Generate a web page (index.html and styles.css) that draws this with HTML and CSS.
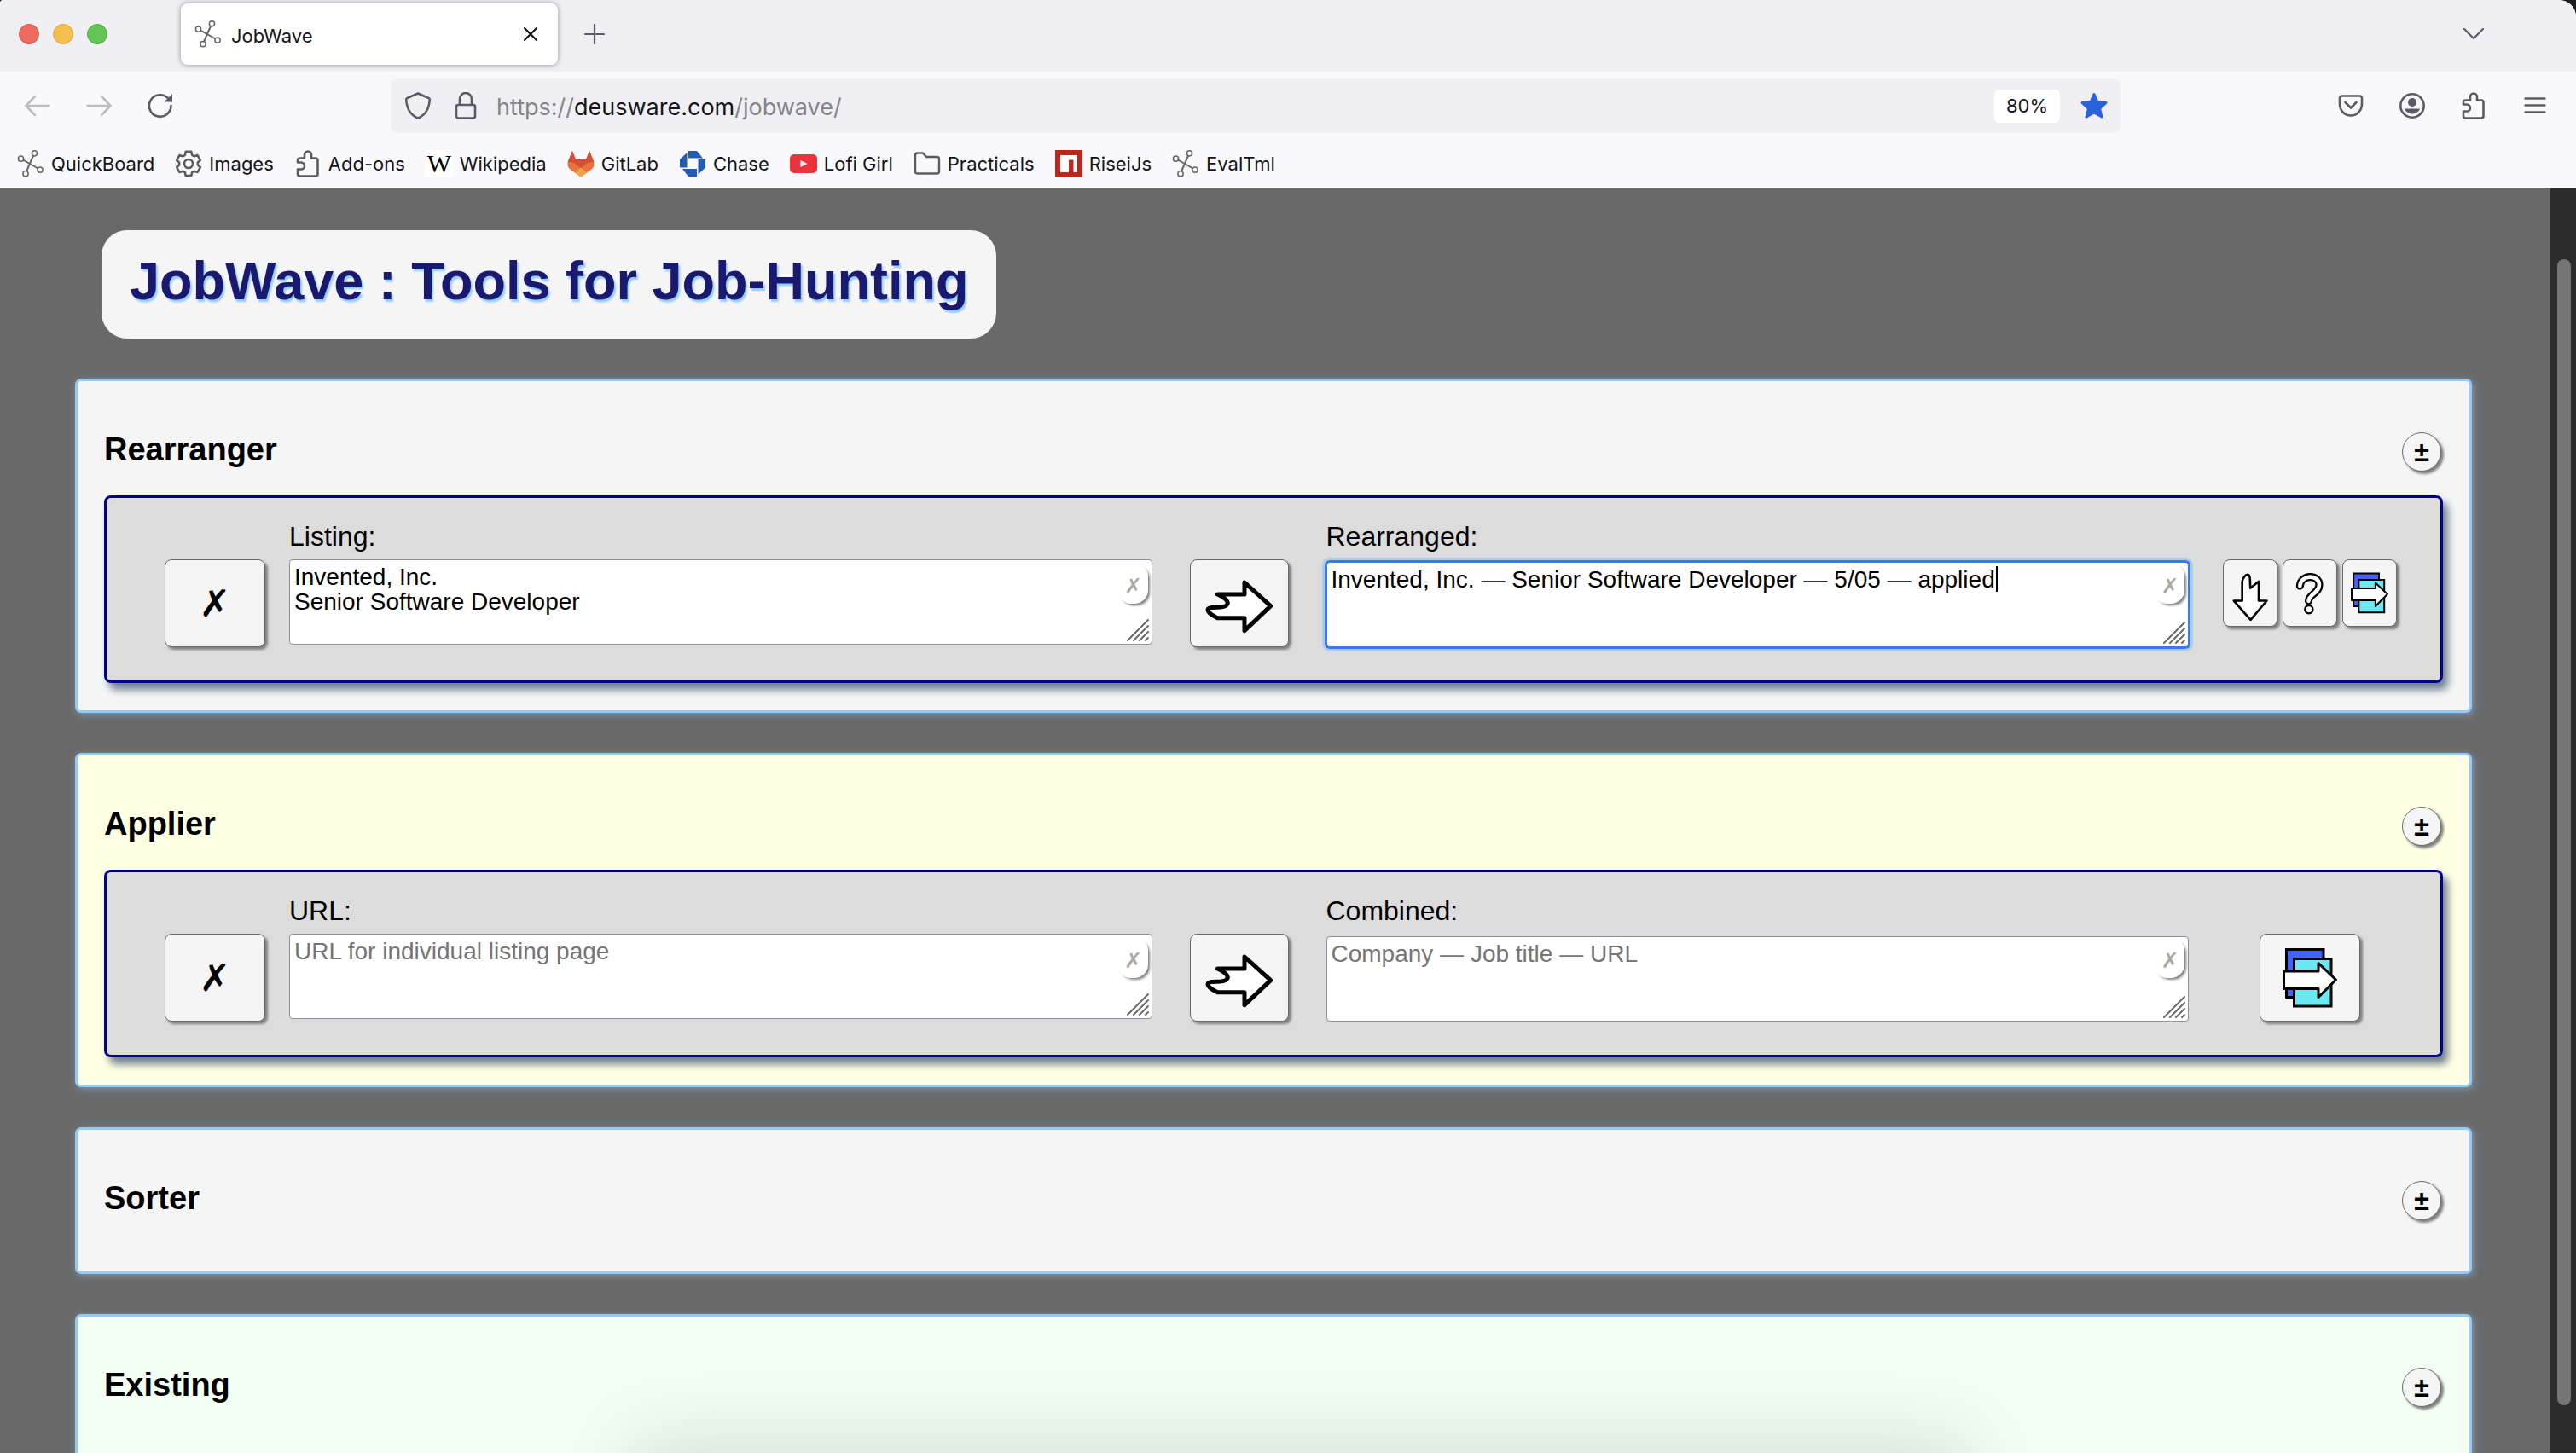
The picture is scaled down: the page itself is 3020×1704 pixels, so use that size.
FILE: index.html
```html
<!DOCTYPE html>
<html lang="en">
<head>
<meta charset="utf-8">
<title>JobWave</title>
<link rel="stylesheet" href="styles.css">
</head>
<body>
<svg class="sprite" aria-hidden="true">
  <symbol id="molecule" viewBox="0 0 32 32"><g fill="none" stroke="#666" stroke-width="1.5"><path d="M7 11.500 24.500 21.500M19.300 6 11 25" stroke-width="2"/><circle cx="4.500" cy="10.200" r="3.100"/><circle cx="20.500" cy="3.800" r="3.100"/><circle cx="27" cy="23.200" r="3.100"/><circle cx="10" cy="27.700" r="3.100"/></g></symbol>
  <symbol id="puzzle" viewBox="0 0 32 32"><path fill="none" stroke="#5b5b66" stroke-width="2.600" stroke-linejoin="round" d="M4 14.500V12Q4 9.500 6.500 9.500H12V5.500A4 4 0 0 1 20 5.500V9.500H25Q27.500 9.500 27.500 12V28Q27.500 30.500 25 30.500H6.500Q4 30.500 4 28V22.500H8A4 4 0 0 0 8 14.500Z"/></symbol>
  <symbol id="right-arrow" viewBox="0 0 240 210"><path fill="#fff" stroke="#000" stroke-width="15" stroke-linejoin="round" d="M43 72H138V30L230 113L138 200V155H43C25 147 9 135 9 127C9 118 25 118 42 118C78 118 86 104 72 90Q62 80 43 72Z"/></symbol>
  <symbol id="copy" viewBox="25 42 134 148"><g stroke="#000" stroke-width="6"><path fill="#4263f5" d="M37 49H124V161H37Z"/><path fill="#6ce9f0" d="M55 71H142V182H55Z"/><path fill="#fff" stroke-linejoin="round" d="M31 100H112V81L153 120L112 161V141H31Z"/></g></symbol>
  <symbol id="grip" viewBox="0 0 26 26"><path stroke="#6b6b6b" stroke-width="2" stroke-linecap="round" d="M1 25 25 1M8 25 25 8M15 25 25 15M22 25 25 22"/></symbol>
</svg>

<header class="chrome">
  <div class="tabstrip">
    <div class="lights"><i class="light red"></i><i class="light amber"></i><i class="light green"></i></div>
    <div class="tab">
      <svg class="icon"><use href="#molecule"/></svg>
      <span class="tab-title">JobWave</span>
      <button class="plain" aria-label="Close tab"><svg width="18" height="18" viewBox="0 0 18 18"><path d="M2 2 16 16M16 2 2 16" stroke="#15141a" stroke-width="2.200" stroke-linecap="round"/></svg></button>
    </div>
    <button class="plain new-tab" aria-label="New tab"><svg width="24" height="24" viewBox="0 0 24 24"><path d="M12 1V23M1 12H23" stroke="#5b5b66" stroke-width="2.200" stroke-linecap="round"/></svg></button>
    <button class="plain list-tabs" aria-label="List all tabs"><svg width="26" height="16" viewBox="0 0 26 16"><path d="M2 2 13 13 24 2" fill="none" stroke="#5b5b66" stroke-width="2.200" stroke-linecap="round" stroke-linejoin="round"/></svg></button>
  </div>

  <div class="navbar">
    <div class="nav-buttons">
      <button class="plain" aria-label="Back"><svg class="icon" viewBox="0 0 32 32"><path d="M13 5 2.500 16 13 27M3 16H29.500" fill="none" stroke="#bcbcc1" stroke-width="2.600" stroke-linecap="round" stroke-linejoin="round"/></svg></button>
      <button class="plain" aria-label="Forward"><svg class="icon" viewBox="0 0 32 32"><path d="M19 5 29.500 16 19 27M29 16H2.500" fill="none" stroke="#bcbcc1" stroke-width="2.600" stroke-linecap="round" stroke-linejoin="round"/></svg></button>
      <button class="plain" aria-label="Reload"><svg class="icon" viewBox="0 0 32 32"><path d="M28.500 16A12.800 12.800 0 1 1 25 7.200" fill="none" stroke="#5b5b66" stroke-width="2.600" stroke-linecap="round"/><path d="M30 2V11.500H20.500Z" fill="#5b5b66"/></svg></button>
    </div>
    <div class="urlbar">
      <svg class="icon" viewBox="0 0 32 32"><path d="M16 1.500 28.500 7Q30 7.500 29.800 9C29 20 25 27 16 30.500C7 27 3 20 2.200 9Q2 7.500 3.500 7Z" fill="none" stroke="#5b5b66" stroke-width="2.600" stroke-linejoin="round"/></svg>
      <svg class="icon" viewBox="0 0 32 32"><path d="M9 15V8A7 7 0 0 1 23 8V15M7 15H25Q27 15 27 17V28Q27 30.500 24.500 30.500H7.500Q5 30.500 5 28V17Q5 15 7 15Z" fill="none" stroke="#5b5b66" stroke-width="2.600"/></svg>
      <div class="address" role="textbox" aria-label="Address" contenteditable="true" spellcheck="false">https://<span class="host">deusware.com</span>/jobwave/</div>
      <button class="zoom">80%</button>
      <button class="plain" aria-label="Bookmark"><svg class="icon" viewBox="0 0 32 32"><path d="M16 2.500 20 11.500 30 12.500 22.500 19.500 25 29 16 24 7 29 9.500 19.500 2 12.500 12 11.500Z" fill="#2a62dc" stroke="#2a62dc" stroke-width="3" stroke-linejoin="round"/></svg></button>
    </div>
    <div class="nav-tools">
      <button class="plain" aria-label="Save to Pocket"><svg class="icon" viewBox="0 0 32 32"><path d="M5 4.500H26.500Q29 4.500 29 7V14A13 13.500 0 0 1 3 14V7Q3 4.500 5.500 4.500ZM9.500 12 16 18.500 22.500 12" fill="none" stroke="#5b5b66" stroke-width="2.600" stroke-linecap="round" stroke-linejoin="round"/></svg></button>
      <button class="plain" aria-label="Account"><svg class="icon" viewBox="0 0 32 32"><circle cx="16" cy="16" r="13.700" fill="none" stroke="#5b5b66" stroke-width="2.600"/><circle cx="16" cy="12" r="5" fill="#5b5b66"/><path d="M7 19.500H25C24 23 20 25.500 16 25.500S8 23 7 19.500Z" fill="#5b5b66"/></svg></button>
      <button class="plain" aria-label="Extensions"><svg class="icon"><use href="#puzzle"/></svg></button>
      <button class="plain" aria-label="Menu"><svg class="icon" viewBox="0 0 32 32"><path d="M4.500 7.500H27.500M4.500 15.500H27.500M4.500 23.500H27.500" stroke="#5b5b66" stroke-width="2.400" stroke-linecap="round"/></svg></button>
    </div>
  </div>

  <nav class="bookmarks">
    <a href="#"><svg class="icon"><use href="#molecule"/></svg>QuickBoard</a>
    <a href="#"><svg class="icon" viewBox="0 0 32 32"><g fill="none" stroke="#5b5b66" stroke-width="2.600" stroke-linejoin="round"><path d="M12.700 1.900H19.300L20.100 5.800 22.800 7.300 26.600 6.100 29.900 11.800 26.900 14.500V17.500L29.900 20.200 26.600 25.900 22.800 24.700 20.100 26.200 19.300 30.100H12.700L11.900 26.200 9.200 24.700 5.400 25.900 2.100 20.200 5.100 17.500V14.500L2.100 11.800 5.400 6.100 9.200 7.300 11.900 5.800Z"/><circle cx="16" cy="16" r="5"/></g></svg>Images</a>
    <a href="#"><svg class="icon"><use href="#puzzle"/></svg>Add-ons</a>
    <a href="#"><span class="wiki">W</span>Wikipedia</a>
    <a href="#"><svg class="icon" viewBox="0 0 32 32"><path d="M6 1 0.500 15Q0 20 4 23L16 31.500 28 23Q32 20 31.500 15L26 1 22 11H10Z" fill="#e8743b"/><path d="M6 1 0.500 14 8 15 16 21.500 24 15 31.500 14 26 1 22 11H10Z" fill="#d65035"/><path d="M16 20.500 9 26.500 16 31.500 23 26.500Z" fill="#f0a640"/></svg>GitLab</a>
    <a href="#"><svg class="icon" viewBox="0 0 32 32"><g fill="#245cb5"><path d="M11 1H21L28 9.500H11Z"/><path d="M22.500 11H31V20.500L22.500 28.500Z"/><path d="M4 22H21V31H11Z"/><path d="M9.500 3V20.500H1V11Z"/></g></svg>Chase</a>
    <a href="#"><svg class="icon" viewBox="0 0 32 32"><rect y="5" width="32" height="22" rx="5" fill="#ea333d"/><path d="M12.500 12V20L20.500 16Z" fill="#fff"/></svg>Lofi Girl</a>
    <a href="#"><svg class="icon" viewBox="0 0 32 32"><path d="M5 3.500H11L15 8H27.500Q30 8 30 10.500V25Q30 27.500 27.500 27.500H4.500Q2 27.500 2 25V6Q2 3.500 5 3.500Z" fill="none" stroke="#5b5b66" stroke-width="2.400" stroke-linejoin="round"/></svg>Practicals</a>
    <a href="#"><svg class="icon" viewBox="0 0 32 32"><path d="M0 0H32V32H0Z" fill="#bb271a"/><path d="M6 6H26V26H21.500V11.500H16V26H6Z" fill="#fff"/></svg>RiseiJs</a>
    <a href="#"><svg class="icon"><use href="#molecule"/></svg>EvalTml</a>
  </nav>
</header>

<div class="viewport">
  <main class="page">
    <h1 class="title">JobWave : Tools for Job-Hunting</h1>

    <section class="card">
      <div class="card-head"><h2>Rearranger</h2><button class="btn round" aria-label="Toggle Rearranger">±</button></div>
      <div class="panel">
        <button class="btn big cross" aria-label="Clear all">✗</button>
        <div class="field">
          <label for="listing">Listing:</label>
          <div class="box">
            <textarea id="listing" spellcheck="false">Invented, Inc.
Senior Software Developer</textarea>
            <button class="clear" aria-label="Clear listing">✗</button>
            <svg class="grip"><use href="#grip"/></svg>
          </div>
        </div>
        <button class="btn big go" aria-label="Rearrange"><svg width="80" height="70"><use href="#right-arrow"/></svg></button>
        <div class="field result">
          <label for="rearranged">Rearranged:</label>
          <div class="box">
            <textarea id="rearranged" class="focused" spellcheck="false">Invented, Inc. — Senior Software Developer — 5/05 — applied</textarea>
            <i class="caret"></i>
            <button class="clear" aria-label="Clear rearranged">✗</button>
            <svg class="grip"><use href="#grip"/></svg>
          </div>
        </div>
        <div class="tools">
          <button class="btn small" aria-label="Move down"><svg width="62" height="77" viewBox="0 0 185 235"><path fill="#fff" stroke="#000" stroke-width="8" stroke-linejoin="round" d="M34 145H64V78C66 64 76 50 84 51Q92 52 92 72L93 100L123 76V145H152L94 213Z"/></svg></button>
          <button class="btn small" aria-label="Help"><svg width="62" height="77" viewBox="0 0 185 235"><g fill="none" stroke-linecap="round"><path stroke="#000" stroke-width="28" d="M57 92C60 50 126 50 126 88C126 118 88 122 88 146"/><path stroke="#fff" stroke-width="14" d="M57 92C60 50 126 50 126 88C126 118 88 122 88 146"/></g><circle cx="89" cy="176" r="14" fill="#fff" stroke="#000" stroke-width="7"/></svg></button>
          <button class="btn small" aria-label="Copy rearranged"><svg width="46" height="51"><use href="#copy"/></svg></button>
        </div>
      </div>
    </section>

    <section class="card yellow">
      <div class="card-head"><h2>Applier</h2><button class="btn round" aria-label="Toggle Applier">±</button></div>
      <div class="panel">
        <button class="btn big cross" aria-label="Clear all">✗</button>
        <div class="field">
          <label for="url">URL:</label>
          <div class="box">
            <textarea id="url" placeholder="URL for individual listing page"></textarea>
            <button class="clear" aria-label="Clear URL">✗</button>
            <svg class="grip"><use href="#grip"/></svg>
          </div>
        </div>
        <button class="btn big go" aria-label="Combine"><svg width="80" height="70"><use href="#right-arrow"/></svg></button>
        <div class="field result">
          <label for="combined">Combined:</label>
          <div class="box">
            <textarea id="combined" placeholder="Company — Job title — URL"></textarea>
            <button class="clear" aria-label="Clear combined">✗</button>
            <svg class="grip"><use href="#grip"/></svg>
          </div>
        </div>
        <div class="tools">
          <button class="btn big" aria-label="Copy combined"><svg width="68" height="74"><use href="#copy"/></svg></button>
        </div>
      </div>
    </section>

    <section class="card">
      <div class="card-head"><h2>Sorter</h2><button class="btn round" aria-label="Toggle Sorter">±</button></div>
    </section>

    <section class="card green">
      <div class="card-head"><h2>Existing</h2><button class="btn round" aria-label="Toggle Existing">±</button></div>
    </section>
  </main>
  <div class="scrollbar"><div class="thumb"></div></div>
  <div class="dock-shadow"></div>
</div>
</body>
</html>
```

FILE: styles.css
```css
* { box-sizing: border-box; }

html { background: #1c1c1e; }

body {
  margin: 0;
  height: 100vh;
  display: flex;
  flex-direction: column;
  overflow: hidden;
  font-family: "Liberation Sans", Arial, sans-serif;
  color: #000;
}

button, textarea { font: inherit; color: inherit; margin: 0; }
button { padding: 0; display: flex; align-items: center; justify-content: center; }
svg { display: block; flex: none; }

.sprite { position: absolute; width: 0; height: 0; }
.icon { width: 32px; height: 32px; }
.plain { border: 0; background: none; }

/* Browser chrome */
.chrome {
  flex: none;
  font-family: Inter, sans-serif;
  font-size: 22px;
  color: #15141a;
  background: #f9f9fb;
  border-bottom: 1px solid #c4c4c8;
  border-radius: 4px 20px 0 0;
  overflow: hidden;
}

.tabstrip {
  display: flex;
  align-items: center;
  height: 84px;
  padding: 0 107px 4px 22px;
  background: #f0eff4;
}
.lights { display: flex; gap: 16px; margin-right: 86px; }
.light { width: 24px; height: 24px; border-radius: 50%; border: 1px solid; }
.red { background: #ed6a5f; border-color: #d65a50; }
.amber { background: #f5bf4f; border-color: #d9a53c; }
.green.light { background: #62c554; border-color: #50ab43; }

.tab {
  display: flex;
  align-items: center;
  gap: 11px;
  width: 442px;
  height: 72px;
  padding: 0 23px 0 16px;
  background: #fff;
  border-radius: 8px;
  box-shadow: 0 0 6px rgba(0, 0, 0, .4);
}
.tab-title { flex: 1; padding-top: 3px; }
.new-tab { margin-left: 31px; }
.list-tabs { margin-left: auto; }

.navbar { display: flex; align-items: center; height: 80px; padding: 0 32px 0 28px; }
.nav-buttons { display: flex; gap: 40px; width: 430px; }
.urlbar {
  flex: 1;
  display: flex;
  align-items: center;
  gap: 24px;
  height: 64px;
  padding: 0 15px 0 16px;
  background: #f0eff4;
  border-radius: 8px;
}
.address { flex: 1; margin-left: -4px; padding-top: 2px; font-size: 27px; color: #85848a; outline: 0; }
.host { color: #15141a; }
.zoom {
  width: 77px;
  height: 39px;
  border: 0;
  border-radius: 6px;
  background: #fff;
}
.nav-tools { display: flex; gap: 40px; margin-left: 254px; }

.bookmarks { display: flex; gap: 24px; height: 56px; padding: 0 20px; align-items: center; }
.bookmarks a {
  display: flex;
  align-items: center;
  gap: 8px;
  color: inherit;
  text-decoration: none;
  white-space: nowrap;
}
.wiki {
  width: 32px;
  height: 32px;
  border-radius: 4px;
  background: #fff;
  font: 30px/32px "Liberation Serif", serif;
  color: #000;
  text-align: center;
}

/* Page area */
.viewport { position: relative; flex: 1; min-height: 0; display: flex; overflow: hidden; background: #696969; }
.page {
  flex: 1;
  display: flex;
  flex-direction: column;
  gap: 47px;
  padding: 49px 92px 0 88px;
}

.title {
  align-self: flex-start;
  margin: 0 0 0 31px;
  padding: 22px 33px 31px;
  background: #f5f5f5;
  border-radius: 30px;
  font-size: 63px;
  line-height: 74px;
  color: midnightblue;
  text-shadow: 2px 3px 2px #94caf8;
}

.card {
  flex: none;
  padding: 31px 31px 32px;
  background: #f5f5f5;
  border: 3px solid #94caf8;
  border-radius: 7px;
  box-shadow: 2px 2px 8px #7d9ab5;
}
.card.yellow { background: #ffffe3; }
.card.green { background: #f2fff2; }

.card-head { display: flex; justify-content: space-between; padding: 27px 2px 28px 0; }
.card-head h2 { margin: 0; font-size: 38px; line-height: 44px; }

.btn {
  background: #f5f5f5;
  border: 1px solid #696969;
  border-radius: 8px;
  box-shadow: 3px 3px 3px gray;
}
.round { width: 46px; height: 46px; margin-top: 2px; border-radius: 50%; font-size: 32px; font-weight: bold; line-height: 32px; }
.big { width: 118px; height: 103px; }
.small { width: 64px; height: 79px; }

.panel {
  display: grid;
  grid-template-columns: 118px 1fr 148px 1fr 228px;
  column-gap: 28px;
  padding: 26px 39px 39px 68px;
  background: gainsboro;
  border: 3px solid darkblue;
  border-radius: 8px;
  box-shadow: 6px 8px 10px slategray;
}
.panel > .btn, .tools { margin-top: 46px; }
.panel > .go { justify-self: center; width: 116px; }
.cross { font: bold 44px/44px "DejaVu Sans", sans-serif; }
.tools { display: flex; justify-content: center; align-items: flex-start; gap: 6px; }

.field label { display: block; margin-bottom: 8px; font-size: 32px; line-height: 38px; }
.box { position: relative; }
.result .box { padding-top: 3px; }
.field textarea {
  display: block;
  width: 100%;
  height: 100px;
  padding: 5px;
  border: 1px solid #8f8f9d;
  border-radius: 4px;
  background: #fff;
  font-size: 28px;
  line-height: 29px;
  resize: none;
  overflow: hidden;
  outline: 0;
}
.field textarea::placeholder { color: #757575; opacity: 1; }
.field textarea.focused { border-color: #3478f6; box-shadow: 0 0 0 2px #3478f6, 0 0 0 5px #aecbe8; }

.caret { position: absolute; left: 785px; top: 8px; width: 2px; height: 30px; background: #000; }
.clear {
  position: absolute;
  top: 4px;
  right: 5px;
  width: 36px;
  height: 48px;
  padding: 6px 0 0 2px;
  border: 0;
  border-radius: 16px;
  background: #fff;
  box-shadow: 3px 3px 3px -1px gray;
  font: bold 25px/25px "DejaVu Sans", sans-serif;
  color: darkgray;
}
.grip { position: absolute; right: 4px; bottom: 4px; width: 26px; height: 26px; }

.scrollbar { flex: none; width: 30px; padding: 83px 6px 0 8px; background: #2c2c2c; }
.thumb { height: 96%; border-radius: 8px; background: #757575; }

/* Shade cast up over the page by the dock below the window */
.dock-shadow {
  position: absolute;
  top: 100%;
  left: 25%;
  right: 24%;
  height: 100px;
  box-shadow: 0 0 90px 16px rgba(0, 0, 0, .12);
}
```
